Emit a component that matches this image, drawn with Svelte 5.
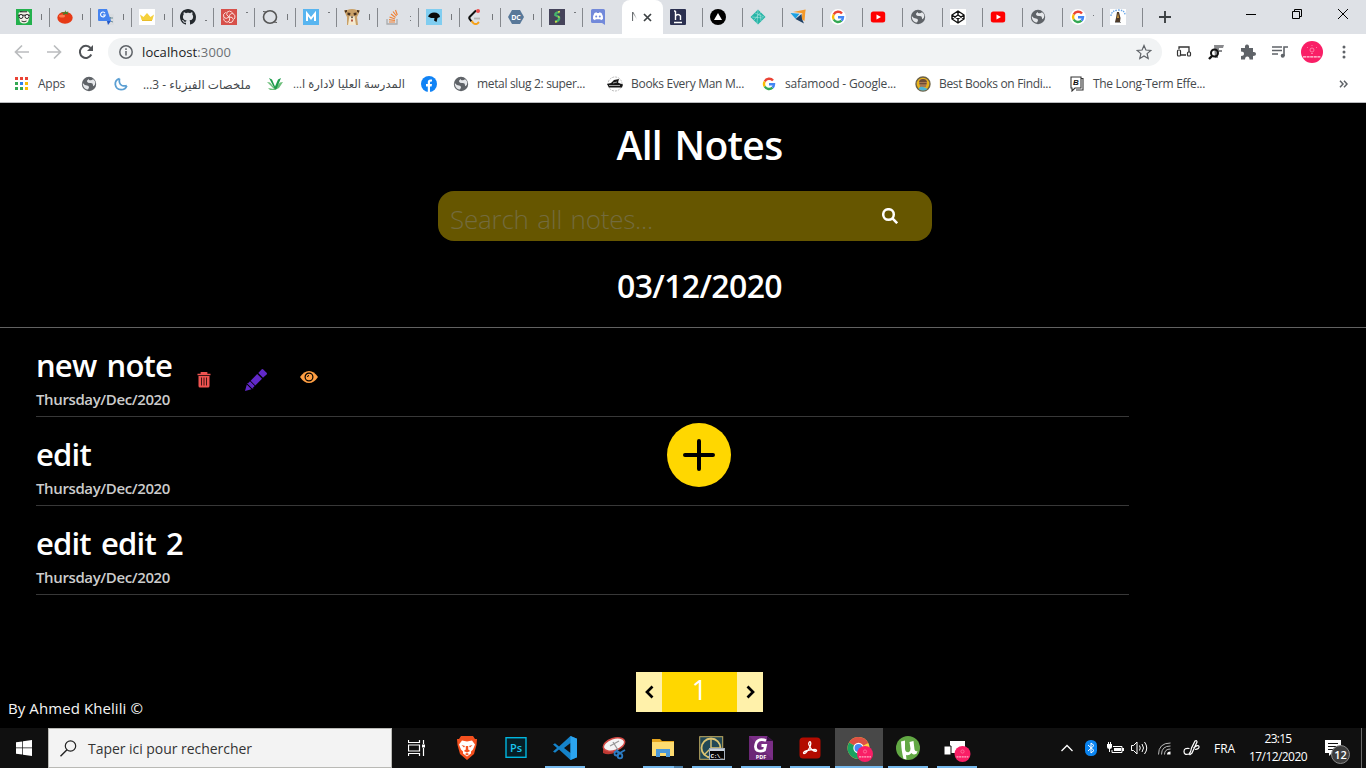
<script>
  // Spreads or tightens a label so that it fills the given width.
  function fit(node, opts) {
    const width = typeof opts === 'number' ? opts : opts.width;
    const measured = node.getBoundingClientRect().width;
    if (!measured || !width) return;
    if (opts.scale) {
      const size = parseFloat(getComputedStyle(node).fontSize);
      node.style.fontSize = `${(size * width) / measured}px`;
    } else {
      const n = [...node.textContent].length;
      node.style.letterSpacing = `${(width - measured) / n}px`;
    }
  }

  const leftTabs = [
    ['face', 'bar'], ['tomato', 'bar'], ['translate', 'bar'], ['crown', 'bar'], ['github', 'low'],
    ['swirl', 'top'], ['ring', 'bar'], ['medium', 'top'], ['dog', 'bar'], ['stack', 'dots'],
    ['bird', 'bar'], ['leet', 'bar'], ['dc', 'bar'], ['snake', 'top'], ['discord', '']
  ];
  const rightTabs = [
    ['hash', ''], ['vercel', ''], ['netlify', ''], ['kite', ''], ['google', ''], ['youtube', ''],
    ['globe', ''], ['codepen', ''], ['youtube', ''], ['globe', ''], ['google', 'mid'], ['statue', '']
  ];
  const bookmarks = [
    { icon: 'apps', text: 'Apps', w: 68, tw: 27, pad: 9 },
    { icon: 'globe', w: 32 },
    { icon: 'moon', text: 'ملخصات الفيزياء - 3...', w: 154, tw: 108, pad: 14, rtl: true },
    { icon: 'leaf', text: 'المدرسة العليا لادارة ا...', w: 154, tw: 112, pad: 10, rtl: true },
    { icon: 'facebook', w: 32 },
    { icon: 'globe', text: 'metal slug 2: super...', w: 154, tw: 108, pad: 8 },
    { icon: 'ship', text: 'Books Every Man M...', w: 154, tw: 113, pad: 8 },
    { icon: 'google', text: 'safamood - Google...', w: 154, tw: 111, pad: 8 },
    { icon: 'badge', text: 'Best Books on Findi...', w: 154, tw: 112, pad: 8 },
    { icon: 'bnote', text: 'The Long-Term Effe...', w: 154, tw: 112, pad: 8 }
  ];
  const notes = [
    { title: 'new note', tw: 136, actions: true },
    { title: 'edit', tw: 55 },
    { title: 'edit edit 2', tw: 147 }
  ];
  const apps = [
    ['brave', ''], ['ps', ''], ['vscode', 'run'], ['snip', ''], ['folder', 'run multi'], ['cmd', 'run'],
    ['foxit', 'run'], ['acrobat', 'run'], ['chrome', 'run active'], ['utorrent', 'run'], ['screens', 'run']
  ];
</script>

{#snippet icon(name, s = 16)}
  {#if name === 'face'}
    <svg width={s} height={s} viewBox="0 0 16 16"><rect width="16" height="16" fill="#23b14d" /><path d="M2.500 6Q2 3 5 3L8 2l4 .5Q14.500 4 13.500 8L12 13Q8 16 4 13Z" fill="#f7f3ea" /><path d="M2 6.200h12M4 2.800h7" stroke="#222" stroke-width="1" /><circle cx="5" cy="7.500" r="2" fill="#fff" stroke="#222" /><circle cx="11" cy="7.500" r="2" fill="#fff" stroke="#222" /><path d="M5.500 12q2.500 1.600 5 0" stroke="#333" fill="none" /></svg>
  {:else if name === 'tomato'}
    <svg width={s} height={s} viewBox="0 0 16 16"><ellipse cx="8" cy="8.800" rx="7.700" ry="6" fill="#e63a16" /><ellipse cx="5" cy="7" rx="3" ry="1.500" fill="#fa7a4d" /><path d="M8 3.500L3.500 3l3 1.500-.5 1.500L8.500 5l3 .5L10.500 4l1-1.500L9 3 8 1Z" fill="#44802b" /></svg>
  {:else if name === 'translate'}
    <svg width={s} height={s} viewBox="0 0 16 16"><path d="M6 5h9q1 0 1 1v9q0 1-1 1H9Z" fill="#dadce0" /><path d="M10 9h5M12.500 8q0 4-3 5M11 10q2 3 4 3" stroke="#6b8d99" fill="none" /><path d="M1 0h8l4 12H1Q0 12 0 11V1Q0 0 1 0Z" fill="#4684ef" /><path d="M9 12h4l-3 4Z" fill="#2056c8" /><path d="M7 4.200A2.400 2.400 0 1 0 7.300 6H5" stroke="#fff" stroke-width="1.100" fill="none" /></svg>
  {:else if name === 'crown'}
    <svg width={s} height={s} viewBox="0 0 16 16"><rect width="16" height="16" fill="#fff" /><path d="M1 5.500l3.500 2.500L8 4l3.500 4L15 5.500 13.400 11H2.600Z" fill="#f5d03b" /><path d="M3 11.500h10" stroke="#e8bd2b" /></svg>
  {:else if name === 'github'}
    <svg width={s} height={s} viewBox="0 0 16 16"><path fill="#24292e" d="M8 0C3.58 0 0 3.58 0 8c0 3.54 2.29 6.53 5.47 7.59.4.07.55-.17.55-.38 0-.19-.01-.82-.01-1.49-2.01.37-2.53-.49-2.69-.94-.09-.23-.48-.94-.82-1.13-.28-.15-.68-.52-.01-.53.63-.01 1.08.58 1.23.82.72 1.21 1.87.87 2.33.66.07-.52.28-.87.51-1.07-1.78-.2-3.64-.89-3.64-3.95 0-.87.31-1.59.82-2.15-.08-.2-.36-1.02.08-2.12 0 0 .67-.21 2.2.82.64-.18 1.32-.27 2-.27s1.36.09 2 .27c1.53-1.04 2.2-.82 2.2-.82.44 1.1.16 1.92.08 2.12.51.56.82 1.27.82 2.15 0 3.07-1.87 3.75-3.65 3.95.29.25.54.73.54 1.48 0 1.07-.01 1.93-.01 2.2 0 .21.15.46.55.38A8.01 8.01 0 0 0 16 8c0-4.42-3.58-8-8-8z" /></svg>
  {:else if name === 'swirl'}
    <svg width={s} height={s} viewBox="0 0 16 16"><rect width="16" height="16" fill="#d7504a" /><g fill="none" stroke="#fbe4e0" stroke-width=".9"><path id="petal" d="M8 8Q4.500 6 6 3.200 8.500.8 11.500 3.500" /><path d="M8 8Q4.500 6 6 3.200 8.500.8 11.500 3.500" transform="rotate(72 8 8)" /><path d="M8 8Q4.500 6 6 3.200 8.500.8 11.500 3.500" transform="rotate(144 8 8)" /><path d="M8 8Q4.500 6 6 3.200 8.500.8 11.500 3.500" transform="rotate(216 8 8)" /><path d="M8 8Q4.500 6 6 3.200 8.500.8 11.500 3.500" transform="rotate(288 8 8)" /></g></svg>
  {:else if name === 'ring'}
    <svg width={s} height={s} viewBox="0 0 16 16"><ellipse cx="8" cy="8" rx="6.500" ry="6.200" fill="none" stroke="#555" stroke-width="1.600" /><path d="M1 2.500l3 .5M12 13l3 .5" stroke="#555" /></svg>
  {:else if name === 'medium'}
    <svg width={s} height={s} viewBox="0 0 16 16"><rect width="16" height="16" fill="#58b5f0" /><path d="M4 12V4.500l4 5 4-5V12" stroke="#fff" stroke-width="2" fill="none" /></svg>
  {:else if name === 'dog'}
    <svg width={s} height={s} viewBox="0 0 16 16"><path d="M0 1.500L3 1q5-2 10 0l3 .5L14.500 5l-1.500 3 1 8H3l0-8L1.500 5Z" fill="#c9a067" /><path d="M5.500 7h5l1.500 9H4Z" fill="#f4e9cf" /><path d="M3.500 3.500l3 .5-.5 2.500-2.500-.5ZM12.500 3.500l-3 .5.5 2.500 2.500-.5ZM6.500 7.500h3L8 9.500ZM.5 1.500L3 1v1.500L1.500 4ZM15.500 1.500L13 1v1.500L14.500 4Z" fill="#46301e" /><path d="M7 10.500h2v2H7Z" fill="#b55643" /></svg>
  {:else if name === 'stack'}
    <svg width={s} height={s} viewBox="0 0 16 16"><path d="M2 10v5h10v-5" stroke="#aaabad" stroke-width="1.300" fill="none" /><path d="M4 13h6M4 10.700l6 .8M4.500 8l5.500 2M6 5l4.500 3.500M8 2.500L11.500 7M10.500 1l1.800 5" stroke="#ef8236" stroke-width="1.200" /></svg>
  {:else if name === 'bird'}
    <svg width={s} height={s} viewBox="0 0 16 16"><rect width="16" height="16" fill="#80cdf0" /><path d="M2 7.500Q4 3.500 8 3.500q5.500 0 6 4.500L11.500 9l-1 4-2.500-1.500L8.500 9 5 9Z" fill="#0a0a0a" /></svg>
  {:else if name === 'leet'}
    <svg width={s} height={s} viewBox="0 0 16 16"><path d="M9 1.500L3 7.500q-1.500 1.500 0 3l1.500 2" stroke="#111" stroke-width="2" fill="none" /><path d="M4.500 12l2 2.200q2 1.500 4 .3l1.500-1.500" stroke="#f5a21c" stroke-width="2" fill="none" /><path d="M7 9.500h6" stroke="#b5b5b5" stroke-width="1.800" /><circle cx="11" cy="2" r="2" fill="#e94b4b" /></svg>
  {:else if name === 'dc'}
    <svg width={s} height={s} viewBox="0 0 16 16"><path d="M4 1h8l4 7-4 7H4L0 8Z" fill="#587899" /><text x="8" y="10.600" text-anchor="middle" font-family="Open Sans" font-size="7" font-weight="700" fill="#fff">DC</text></svg>
  {:else if name === 'snake'}
    <svg width={s} height={s} viewBox="0 0 16 16"><rect width="16" height="16" fill="#45435a" /><path d="M10.500 3.500Q6 3 6.300 6l3.700 2q1 4-4 4.500" stroke="#46b36b" stroke-width="2.300" fill="none" /><path d="M9 3l2-.5M9 7.500l1.500 1M6 13l2-.5" stroke="#d8d34a" stroke-width="1.300" /></svg>
  {:else if name === 'discord'}
    <svg width={s} height={s} viewBox="0 0 16 16"><path d="M2.500 0h11Q15 0 15 1.500V16l-3-2H2.500Q1 14 1 12.500v-11Q1 0 2.500 0Z" fill="#7289da" /><path d="M3 10q0-4 1.500-6L6.500 3.300 7 4h2l.5-.7 2 .7Q13 6 13 10l-2 1.200-.7-1H5.700l-.7 1Z" fill="#fff" /><circle cx="6.200" cy="7.400" r="1" fill="#7289da" /><circle cx="9.800" cy="7.400" r="1" fill="#7289da" /></svg>
  {:else if name === 'hash'}
    <svg width={s} height={s} viewBox="0 0 16 16"><rect width="16" height="16" rx="1" fill="#2b3050" /><path d="M5.500 2v9M5.500 7q1-1.500 2.500-1.500T10.500 7v4M4 2h1.500M4 13.500h8" stroke="#fff" stroke-width="1.400" fill="none" /></svg>
  {:else if name === 'vercel'}
    <svg width={s} height={s} viewBox="0 0 16 16"><circle cx="8" cy="8" r="8" fill="#000" /><path d="M8 4l4 7H4Z" fill="#fff" /></svg>
  {:else if name === 'netlify'}
    <svg width={s} height={s} viewBox="0 0 16 16"><path d="M8 .5L15.500 8 8 15.500.5 8Z" fill="#27b5a7" /><path d="M5 4l9 4M2 8l11 1M8 1l-1 14M4 11l7-8M10 5l1 7" stroke="#bdebe6" stroke-width=".5" /></svg>
  {:else if name === 'kite'}
    <svg width={s} height={s} viewBox="0 0 16 16"><path d="M3 3L15.500.5 14.500 5 11 4Z" fill="#f59a2b" /><path d="M.5 4l9 .8-4 5Z" fill="#1ba0e2" /><path d="M15.500.5L14.500 12l-3-2 1-6Z" fill="#f59a2b" /><path d="M5.500 10l6-5 .5 5 2 4.500Z" fill="#203f63" /></svg>
  {:else if name === 'google'}
    <svg width={s} height={s} viewBox="0 0 16 16"><circle cx="8" cy="8" r="7.900" fill="#fff" /><g fill="none" stroke-width="2.400"><path d="M12 4.600A5 5 0 0 0 3.700 5.500" stroke="#ea4335" /><path d="M3.700 5.500a5 5 0 0 0 0 5" stroke="#fbbc05" /><path d="M3.700 10.500a5 5 0 0 0 7.800 1.100" stroke="#34a853" /><path d="M11.500 11.600A5 5 0 0 0 13 8.200H8" stroke="#4285f4" /></g></svg>
  {:else if name === 'youtube'}
    <svg width={s} height={s} viewBox="0 0 16 16"><rect x=".8" y="2.500" width="14.400" height="11" rx="2.500" fill="#f00" /><path d="M6.500 5.500L11 8l-4.500 2.500Z" fill="#fff" /></svg>
  {:else if name === 'globe'}
    <svg width={s} height={s} viewBox="0 0 16 16"><circle cx="8" cy="8" r="7.200" fill="#5f6368" /><path d="M1.800 7q2 2.500 4.200 2.500 2 0 2 2L7 13.500q-4 0-5.200-5ZM8 3q-2.500 1-2 2.500T9 7q3-.5 3 2t2-.5q1-3.500-2-5.200Q10.500 5 8 4Z" fill="#e6e8eb" /></svg>
  {:else if name === 'codepen'}
    <svg width={s} height={s} viewBox="0 0 16 16"><rect width="16" height="16" fill="#fff" /><path d="M8 2l6 4v4l-6 4-6-4V6ZM8 2v4M8 10v4M2 6l6 4 6-4M2 10l6-4 6 4" stroke="#111" stroke-width="1.400" fill="none" stroke-linejoin="round" /></svg>
  {:else if name === 'statue'}
    <svg width={s} height={s} viewBox="0 0 16 16"><rect width="16" height="16" fill="#fff" /><path d="M1 7q0-5 7-6 7 0 7 5" stroke="#6aa7e8" stroke-width="1.400" fill="none" stroke-dasharray="1.500 1" /><path d="M7 3h2l1.500 6-.5 4H5l1-4Z" fill="#4d3a2a" /><path d="M8 4l1 5H7Z" fill="#d19b3f" /><path d="M5 13.500h6" stroke="#999" /></svg>
  {:else if name === 'apps'}
    <svg width={s} height={s} viewBox="0 0 16 16"><path d="M2 1h3v3H2ZM7 1h3v3H7ZM12 1h3v3h-3Z" fill="#ea4335" /><path d="M2 6h3v3H2Z" fill="#34a853" /><path d="M7 6h3v3H7Z" fill="#2f80ed" /><path d="M12 6h3v3h-3Z" fill="#fbbc05" /><path d="M2 11h3v3H2ZM7 11h3v3H7Z" fill="#34a853" /><path d="M12 11h3v3h-3Z" fill="#fbbc05" /></svg>
  {:else if name === 'moon'}
    <svg width={s} height={s} viewBox="0 0 16 16"><path d="M6.500 2.500Q2 4 2.300 8.500q.7 5 5.700 5.200 4.500 0 5.800-4M6.500 2.500Q5.500 8 9 9.500q2 .8 4.800.2" stroke="#5b9fd3" stroke-width="1.800" fill="none" /></svg>
  {:else if name === 'leaf'}
    <svg width={s} height={s} viewBox="0 0 16 16"><path d="M8 14L0 6l3 .5 5 6 5-6 3-.5-4 6-4 2H3l-2-2 6 1Z" fill="#6dbf7b" /><path d="M8 13.500L2 2l3 1.500 3 7 3-7L14 2 9.500 13Z" fill="#1f9d4c" /></svg>
  {:else if name === 'facebook'}
    <svg width={s} height={s} viewBox="0 0 16 16"><circle cx="8" cy="8" r="8" fill="#1183f5" /><path d="M6.800 16v-5.500H5V8h1.800V6.300Q6.800 3.500 9.500 3.500l1.500.1v2H10Q9 5.600 9 6.800V8h2l-.4 2.500H9V16Z" fill="#fff" /></svg>
  {:else if name === 'ship'}
    <svg width={s} height={s} viewBox="0 0 16 16"><circle cx="8" cy="8" r="7" fill="none" stroke="#aaa" stroke-width=".8" stroke-dasharray="2 1" /><path d="M0 8l4-1 3-3 5-1-1 3.500 2 1 3 1-1 3H2Z" fill="#161616" /><path d="M2 9.500h11M6 7l4-1" stroke="#fff" stroke-width=".6" /></svg>
  {:else if name === 'badge'}
    <svg width={s} height={s} viewBox="0 0 16 16"><circle cx="8" cy="8" r="7" fill="#e8b31c" stroke="#6b6047" stroke-width="1.400" /><path d="M4 6q0-3 4-3t4 3l-1 5H5Z" fill="#a87852" /><path d="M4 6q1-3 4-3t4 3ZM4.500 7h7v1.300h-7Z" fill="#6b4c38" /><path d="M3.500 13q1-3 4.500-2t4.500 2Q8 16 3.500 13Z" fill="#4bb5d8" /></svg>
  {:else if name === 'bnote'}
    <svg width={s} height={s} viewBox="0 0 16 16"><path d="M2 1h10v11H6l-3 3v-3H2ZM12 2.500h2V14H7" fill="#fff" stroke="#333" stroke-width="1.100" /><text x="7" y="9.300" text-anchor="middle" font-family="Liberation Sans" font-style="italic" font-size="8" font-weight="700" fill="#111">B</text></svg>
  {:else if name === 'brave'}
    <svg width={s} height={s} viewBox="0 0 24 24"><path d="M6 0h12l2 3 2 0-.5 6L19 18l-7 6-7-6L2.500 9 2 3l2 0Z" fill="#f4501e" /><path d="M7 4.500l5 1 5-1 3 4-2 5-2 2 0 2-4 3-4-3 0-2-2-2-2-5Z" fill="#fff" /><path d="M6.500 9l3.500 1-1 1.500ZM17.500 9L14 10l1 1.500ZM10.800 10v3.500l-2 1.500 3.200 1.500 3.200-1.500-2-1.500V10M10 18l2-1 2 1-2 1.500Z" fill="#f4501e" /></svg>
  {:else if name === 'ps'}
    <svg width={s} height={s} viewBox="0 0 24 24"><rect x="2" y="1.700" width="20" height="19.600" fill="#061e26" stroke="#00b6df" stroke-width="1.400" /><text x="12" y="15.700" text-anchor="middle" font-family="Open Sans" font-size="11" font-weight="600" fill="#1bc4ee">Ps</text></svg>
  {:else if name === 'vscode'}
    <svg width={s} height={s} viewBox="0 0 24 24"><path d="M17.500 0L24 2.800v18.400L17.500 24 6 13.500l-4 3.200L0 15.500 4 12 0 8.500l2-1.200 4 3.200Zm0 7L11 12l6.500 5Z" fill="#1583ca" /><path d="M17.500 0L24 2.800v18.400L17.500 24Z" fill="#2ba4ef" /></svg>
  {:else if name === 'snip'}
    <svg width={s} height={s} viewBox="0 0 24 24"><path d="M1 13q6 5 14-1l-1 4Q7 20 1 17Z" fill="#bd3832" /><ellipse cx="12" cy="8.500" rx="11" ry="6" transform="rotate(-18 12 8.500)" fill="#f5f5f5" stroke="#d34a45" stroke-width="1.500" /><path d="M8 10l9-5M11 6l5 8" stroke="#999" stroke-width="1.300" /><g fill="none" stroke="#2c7cc4" stroke-width="1.800"><path d="M14 14l4 3 5-3" /><circle cx="14.500" cy="17.500" r="2" /><circle cx="18" cy="20" r="2.300" /></g></svg>
  {:else if name === 'folder'}
    <svg width={s} height={s} viewBox="0 0 24 24"><path d="M1 3h8l2 2h12v4H1Z" fill="#e5a51e" /><path d="M1 6h22v14H1Z" fill="#fddb70" /><path d="M5 21v-8h14v8h-4v-4H9v4Z" fill="#4b98d8" /></svg>
  {:else if name === 'cmd'}
    <svg width="26" height={s} viewBox="0 0 26 24"><rect x=".7" y=".7" width="23" height="22.600" fill="#224855" stroke="#c3ae64" /><circle cx="12" cy="12" r="9.500" fill="none" stroke="#ddc572" stroke-width="1.800" /><path d="M12 2v10h9M5 19l7-7" stroke="#ddc572" stroke-width="1.400" fill="none" /><rect x="10.500" y="12.500" width="15" height="11" fill="#050505" stroke="#a7b1bd" /><path d="M11 14h14" stroke="#c6d0da" stroke-width="2" /><text x="11.500" y="21.500" font-family="Liberation Mono" font-size="6" font-weight="700" textLength="13" fill="#fff">C:\_</text></svg>
  {:else if name === 'foxit'}
    <svg width={s} height={s} viewBox="0 0 24 24"><path d="M0 0h18l6 5v19H0Z" fill="#6b2776" /><path d="M0 0l24 24V6L18 0Z" fill="#843491" opacity=".6" /><path d="M18 0v5h6Z" fill="#351041" /><path d="M17 4.500Q10 2 7.500 6.500 5 12 8.500 14.500q4 1.500 7-.5l1-4.500h-4" stroke="#fff" stroke-width="2.800" fill="none" /><text x="12" y="22.800" text-anchor="middle" font-family="Open Sans" font-size="5.500" font-weight="700" fill="#fff">PDF</text></svg>
  {:else if name === 'acrobat'}
    <svg width={s} height={s} viewBox="0 0 24 24"><rect x="1.500" y="1.500" width="21" height="21" rx="3.500" fill="#b30b00" /><path d="M11 6.500q1.600-2 1.800 1Q12.600 12 7.500 17q-2 1.500-2-.2Q6.500 14 17 13.500q2.500.5 1 1.800-4 .8-7-6.300-.7-1.500 0-2.500Z" fill="none" stroke="#fff" stroke-width="1.300" /></svg>
  {:else if name === 'chrome'}
    <svg width={s} height={s} viewBox="0 0 24 24" style:overflow="visible"><circle cx="11.500" cy="12" r="11" fill="#ffcd42" /><path d="M11.500 12L2 6.500Q5 1 11.500 1t9.800 6Z" fill="#dd5144" /><path d="M2 6.500Q-2 14 4 20q4 3.500 7.500 3L16 14l-4.500-2Z" fill="#1aa260" /><circle cx="11.500" cy="12" r="5.200" fill="#fff" /><circle cx="11.500" cy="12" r="4" fill="#4687f4" /><circle cx="18" cy="18" r="8" fill="#f91e66" /><circle cx="18" cy="15.500" r="1.600" fill="none" stroke="#ff7ba2" stroke-width=".8" /><path d="M12 20.800h12" stroke="#ffabc3" stroke-width="1.200" stroke-dasharray="2 .6" /></svg>
  {:else if name === 'utorrent'}
    <svg width={s} height={s} viewBox="0 0 24 24"><circle cx="12" cy="12" r="12" fill="#62a844" /><path d="M5 5.500l4-1V13q.5 3.500 3.500 3.200 2-.5 2-3.500L13.500 6l4-1 1 8.500q.7 2.500 3 1.500l-1 2.800q-3.700 1.700-5-.8-2.500 3-5.500 2l.5 4.500-3-.8Q5.500 16 5 5.500Z" fill="#fff" /></svg>
  {:else if name === 'screens'}
    <svg width={s} height={s} viewBox="0 0 24 24" style:overflow="visible"><path d="M5 5h15v12H5Z" fill="#fff" /><path d="M-1 10h7v9h-7Z" fill="#fff" stroke="#111" /><circle cx="17.500" cy="18" r="8" fill="#f91e66" /><circle cx="17.500" cy="15.500" r="1.600" fill="none" stroke="#ff7ba2" stroke-width=".8" /><path d="M11.500 20.800h12" stroke="#ffabc3" stroke-width="1.200" stroke-dasharray="2 .6" /></svg>
  {/if}
{/snippet}

<div class="screen">
  <div class="tabs">
    <div class="group left">
      {#each leftTabs as [name, hint], i}
        <div class="tab" class:last={i === leftTabs.length - 1}>{@render icon(name)}<i class="hint {hint}"></i></div>
      {/each}
    </div>
    <div class="tab-active">
      <span class="cut">N</span>
      <svg width="9" height="9" viewBox="0 0 9 9"><path d="M1 1l7 7M8 1L1 8" stroke="#3c4043" stroke-width="1.700" /></svg>
    </div>
    <div class="group right">
      {#each rightTabs as [name, hint]}
        <div class="tab">{@render icon(name)}<i class="hint {hint}"></i></div>
      {/each}
    </div>
    <svg class="newtab" width="12" height="12" viewBox="0 0 12 12"><path d="M6 0v12M0 6h12" stroke="#3c4043" stroke-width="1.900" /></svg>
    <div class="winctl">
      <svg width="10" height="10" viewBox="0 0 10 10"><path d="M0 5.500h10" stroke="#000" /></svg>
      <svg width="10" height="10" viewBox="0 0 10 10"><path d="M.5 2.500h7v7h-7ZM2.500 2.500v-2h7v7h-2" stroke="#000" fill="none" /></svg>
      <svg width="10" height="10" viewBox="0 0 10 10"><path d="M0 0l10 10M10 0L0 10" stroke="#000" /></svg>
    </div>
  </div>

  <div class="toolbar">
    <div class="nav">
      <svg width="16" height="16" viewBox="0 0 16 16"><path d="M15 8H2M8 1.500L1.500 8 8 14.500" stroke="#babcbe" stroke-width="1.700" fill="none" /></svg>
      <svg width="16" height="16" viewBox="0 0 16 16"><path d="M1 8h13M8 1.500L14.500 8 8 14.500" stroke="#babcbe" stroke-width="1.700" fill="none" /></svg>
      <svg width="16" height="16" viewBox="0 0 16 16"><path d="M13.300 10.500A6 6 0 1 1 12.500 4" stroke="#505357" stroke-width="2" fill="none" /><path d="M15 1v6H9Z" fill="#505357" /></svg>
    </div>
    <div class="omnibox">
      <svg width="14" height="14" viewBox="0 0 14 14"><circle cx="7" cy="7" r="6.200" stroke="#5f6368" stroke-width="1.500" fill="none" /><path d="M7 6v4.500M7 3.300v1.600" stroke="#5f6368" stroke-width="1.500" /></svg>
      <span class="url" use:fit={89}>localhost<span>:3000</span></span>
      <svg class="star" width="16" height="16" viewBox="0 0 16 16"><path d="M8 1.500l1.900 4.500 4.900.4-3.700 3.200 1.100 4.800L8 11.900l-4.200 2.500 1.100-4.800L1.200 6.400 6.100 6Z" stroke="#5f6368" stroke-width="1.200" fill="none" /></svg>
    </div>
    <div class="ext">
      <svg width="16" height="16" viewBox="0 0 16 16"><path d="M3 5V3h10v5M5 11h5" stroke="#333" stroke-width="1.300" fill="none" /><rect x="1.500" y="6" width="3" height="6" rx="1" fill="#fff" stroke="#333" stroke-width="1.200" /><rect x="11.500" y="8" width="3" height="4" rx="1" fill="#fff" stroke="#333" stroke-width="1.200" /></svg>
      <svg width="16" height="16" viewBox="0 0 16 16"><path d="M6 1h10l-1 3h-4v2h3v2h-4v6H7Z" fill="#88898c" /><circle cx="6.500" cy="9" r="3.500" fill="none" stroke="#111" stroke-width="2" /><path d="M4 12l-3 3" stroke="#111" stroke-width="2.400" /></svg>
      <svg width="16" height="16" viewBox="0 0 16 16"><path d="M1 4h4q-.5-3.500 2-3.500T9 4h4v4q3-.4 3 1.800T13 12v3.500H9.500q0-3-2.200-3t-2.300 3H1V12q3 0 3-2.200T1 7.500Z" fill="#5f6368" /></svg>
      <svg width="16" height="16" viewBox="0 0 16 16"><path d="M0 3h10M0 6.500h10M0 10h6M12 12V3h4" stroke="#5f6368" stroke-width="1.600" fill="none" /><circle cx="10.700" cy="11.800" r="2" fill="#5f6368" /></svg>
      <svg width="22" height="22" viewBox="0 0 22 22"><circle cx="11" cy="11" r="11" fill="#f91e66" /><circle cx="11" cy="9" r="2" stroke="#ff8fb2" fill="none" stroke-width=".8" /><path d="M11 5v-1M7 7l-1-1M15 7l1-1M10 12.500h2" stroke="#ff8fb2" stroke-width=".8" /><path d="M2 15.800h18" stroke="#ffd5e1" stroke-width="1.300" stroke-dasharray="3 .6" /></svg>
      <svg width="16" height="16" viewBox="0 0 16 16"><g fill="#5f6368"><circle cx="8" cy="3" r="1.500" /><circle cx="8" cy="8" r="1.500" /><circle cx="8" cy="13" r="1.500" /></g></svg>
    </div>
  </div>

  <div class="bookmarks">
    {#each bookmarks as b}
      <div class="bm" style:width="{b.w}px">
        {@render icon(b.icon)}
        {#if b.text}
          <span class="bmt" class:rtl={b.rtl} style:margin-left="{b.pad}px" dir={b.rtl ? 'rtl' : 'ltr'} use:fit={{ width: b.tw, scale: b.rtl }}>{b.text}</span>
        {/if}
      </div>
    {/each}
    <svg class="more" width="9" height="8" viewBox="0 0 9 8"><path d="M1 .8L4 4 1 7.200M5 .8L8 4 5 7.200" stroke="#5f6368" stroke-width="1.500" fill="none" /></svg>
  </div>

  <main>
    <h1><span use:fit={166}>All Notes</span></h1>
    <div class="search">
      <span use:fit={203}>Search all notes...</span>
      <svg width="16" height="16" viewBox="0 0 16 16"><circle cx="6.500" cy="6.500" r="5.300" stroke="#fff" stroke-width="2.500" fill="none" /><path d="M10.200 10.200l5 5" stroke="#fff" stroke-width="2.600" /></svg>
    </div>
    <h2><span use:fit={165}>03/12/2020</span></h2>
    <ul>
      {#each notes as n}
        <li>
          <div class="text">
            <h3><span use:fit={n.tw}>{n.title}</span></h3>
            <p><span use:fit={134}>Thursday/Dec/2020</span></p>
          </div>
          {#if n.actions}
            <div class="actions">
              <svg width="14" height="16" viewBox="0 0 14 16"><path d="M4.500 2V.8h5V2M.5 2.500h13" stroke="#ef5350" stroke-width="1.700" fill="none" /><path d="M1.500 4h11v10q0 1.500-1.500 1.500H3q-1.500 0-1.500-1.500Z" fill="#ef5350" /><path d="M4.500 5.500v8M7 5.500v8M9.500 5.500v8" stroke="#421413" /></svg>
              <svg width="22" height="22" viewBox="0 0 22 22"><path d="M0 22l1.800-6.500 4.700 4.700ZM2.800 14.500L5 12.300 9.700 17 7.500 19.200ZM5.600 11.700L12.200 5 17 9.800 10.300 16.400ZM13.300 4L16.500.5q1-.8 1.800 0l3.300 3.300q.8.900 0 1.700L18 8.700Z" fill="#6128c9" /><path d="M2.500 14.200L7.800 19.500" stroke="#6128c9" /></svg>
              <svg width="18" height="12" viewBox="0 0 18 12"><path d="M0 6Q4 0 9 0t9 6q-4 6-9 6T0 6Z" fill="#ff9f43" /><circle cx="9" cy="6" r="3.900" fill="none" stroke="#000" stroke-width="1.200" /><path d="M7.500 6q0-1.500 1.500-1.500" stroke="#000" fill="none" /></svg>
            </div>
          {/if}
        </li>
      {/each}
    </ul>
    <div class="pager">
      <button aria-label="previous"><svg width="9" height="14" viewBox="0 0 9 14"><path d="M7.500 1.500L2 7l5.500 5.500" stroke="#000" stroke-width="2.700" fill="none" /></svg></button>
      <span>1</span>
      <button aria-label="next"><svg width="9" height="14" viewBox="0 0 9 14"><path d="M1.500 1.500L7 7l-5.500 5.500" stroke="#000" stroke-width="2.700" fill="none" /></svg></button>
    </div>
    <footer><span use:fit={135}>By Ahmed Khelili ©</span></footer>
    <button class="add" aria-label="add"><svg width="32" height="32" viewBox="0 0 32 32"><path d="M16 2v28M2 16h28" stroke="#000" stroke-width="4" stroke-linecap="round" /></svg></button>
  </main>

  <div class="taskbar">
    <div class="start"><svg width="16" height="16" viewBox="0 0 16 16"><path d="M0 2.300l6.300-.9v6.200H0ZM7 1.300L16 0v7.600H7ZM0 8.300h6.300v6.300L0 13.700ZM7 8.300h9V16l-9-1.300Z" fill="#fff" /></svg></div>
    <div class="find">
      <svg width="17" height="17" viewBox="0 0 17 17"><circle cx="10.500" cy="6" r="5.200" stroke="#222" stroke-width="1.200" fill="none" /><path d="M7 9.800L.5 16.300" stroke="#222" stroke-width="1.400" /></svg>
      <span use:fit={164}>Taper ici pour rechercher</span>
    </div>
    <div class="view"><svg width="17" height="16" viewBox="0 0 17 16"><path d="M.5 0v2.500h11V0M.5 16v-2.500h11V16M.5 5h11v6H.500ZM15.500 0v4M15.500 8v8" stroke="#fff" stroke-width="1.200" fill="none" /><rect x="14" y="4.500" width="3" height="3" fill="#fff" /></svg></div>
    <div class="apps">
      {#each apps as [name, state]}
        <div class="app {state}">{@render icon(name, 24)}</div>
      {/each}
    </div>
    <div class="tray">
      <div style:width="24px"><svg width="12" height="8" viewBox="0 0 12 8"><path d="M.5 7L6 1.500 11.500 7" stroke="#fff" stroke-width="1.300" fill="none" /></svg></div>
      <div style:width="24px"><svg width="12" height="16" viewBox="0 0 12 16"><rect width="12" height="16" rx="5.500" fill="#0a84f0" /><path d="M3 5l6 5.500L6 13V3l3 2.500L3 11" stroke="#fff" fill="none" /></svg></div>
      <div style:width="24px"><svg width="17" height="12" viewBox="0 0 17 12"><path d="M6 4.500h9v6H5V8" stroke="#fff" fill="none" /><path d="M7 6h7v3H7ZM15 6h2v3h-2ZM0 2h5v3q0 2-2.500 2T0 5Z" fill="#fff" /><path d="M1.500 0v2M3.500 0v2M2.500 6v4" stroke="#fff" /></svg></div>
      <div style:width="24px"><svg width="17" height="14" viewBox="0 0 17 14"><path d="M.5 4.500h2L6 1v12L2.500 9.500h-2ZM8.500 4.500q1.500 2.500 0 5M11 3q3 4 0 8M13.500 1q4.500 6 0 12" stroke="#fff" fill="none" /></svg></div>
      <div style:width="26px"><svg width="13" height="13" viewBox="0 0 13 13"><path d="M.5 12.500Q.5 1 12.500 1M3.500 12.500Q3.500 4 12.500 4M6.500 12.500q0-5.500 6-5.500" stroke="#bbb" fill="none" /><path d="M9 12.500q0-3 3.500-3v3Z" fill="#fff" /></svg></div>
      <div style:width="28px"><svg width="17" height="16" viewBox="0 0 17 16"><path d="M6.500 8.500Q1 7.500 1 11.500T6 14q2-2 2.500-6L12 1q2-1 2 1L9 13l-2.500 2M10.500 8q5-4 5.500-1.500T12 9.500" stroke="#fff" stroke-width="1.200" fill="none" /></svg></div>
      <div style:width="39px"><span use:fit={21}>FRA</span></div>
      <div class="clock"><span use:fit={27}>23:15</span><span use:fit={58}>17/12/2020</span></div>
      <div class="notif">
        <svg width="16" height="16" viewBox="0 0 16 16"><path d="M0 0h16v13H7l-3 3v-3H0Z" fill="#fff" /><path d="M3 3.500h10M3 6.500h10M3 9.500h7" stroke="#111" /></svg>
        <b>12</b>
      </div>
      <div class="desk"></div>
    </div>
  </div>
</div>

<style>
  :global(body) { margin: 0; background: #000; overflow: hidden; }
  * { box-sizing: border-box; }
  svg { display: block; flex: none; }
  span { white-space: pre; }
  button { border: 0; padding: 0; }
  .screen { width: 1366px; height: 768px; display: flex; flex-direction: column; font-family: "Open Sans", "Noto Sans", "DejaVu Sans", sans-serif; }

  .tabs { height: 34px; background: #dee1e6; display: flex; flex: none; }
  .group { display: flex; }
  .left { padding-left: 8px; }
  .tab { width: 41px; height: 19px; margin-top: 8px; padding: 1px 0 0 7px; border-right: 1px solid #85888d; display: flex; }
  .left .tab:first-child { width: 42px; padding-left: 8px; }
  .tab.last { width: 40px; border-color: transparent; }
  .right .tab { width: 40px; }
  .hint { width: 1px; margin: 5px 0 0 9px; height: 0; background: #75787c; flex: none; }
  .hint.bar { height: 6px; }
  .hint.top { height: 1px; width: 2px; margin-top: 3px; }
  .hint.mid { height: 1px; width: 1px; margin: 6px 0 0 7px; }
  .hint.low { height: 1px; width: 2px; margin-top: 11px; }
  .hint.dots { height: 5px; margin-top: 7px; background: none; border-top: 1px solid #75787c; border-bottom: 1px solid #75787c; }
  .tab-active { width: 41px; background: #fff; border-radius: 8px 8px 0 0; display: flex; align-items: center; padding-left: 9px; gap: 6px; margin-left: -1px; }
  .cut { width: 6px; overflow: hidden; font-size: 12px; color: #45494d; line-height: 34px; -webkit-mask-image: linear-gradient(90deg, #000 20%, transparent); mask-image: linear-gradient(90deg, #000 20%, transparent); }
  .newtab { margin: 11px 0 0 16px; }
  .winctl { margin-left: auto; display: flex; gap: 36px; padding: 9px 18px 0 0; }

  .toolbar { height: 36px; background: #fff; display: flex; align-items: center; flex: none; }
  .nav { display: flex; gap: 16px; padding-left: 14px; width: 108px; }
  .omnibox { width: 1054px; height: 28px; border-radius: 14px; background: #f1f3f4; display: flex; align-items: center; padding: 0 10px 0 11px; }
  .url { margin-left: 9px; font-size: 13px; color: #202124; }
  .url span { color: #6d7175; }
  .star { margin-left: auto; }
  .ext { display: flex; align-items: center; padding-left: 14px; gap: 16px; }
  .ext svg:nth-child(5) { margin: 0 -3px; }

  .bookmarks { height: 33px; background: #fff; border-bottom: 1px solid #b9bbbe; display: flex; flex: none; padding: 6px 0 0 13px; }
  .bm { display: flex; align-items: center; height: 16px; flex: none; }
  .bmt { font-size: 12px; line-height: 16px; color: #45494d; }
  .more { margin: 4px 18px 0 auto; }

  main { height: 625px; flex: none; background: #000; color: #fff; position: relative; display: flex; flex-direction: column; }
  h1, h2, h3, p, ul { margin: 0; padding: 0; font-weight: 600; }
  h1 { height: 81px; line-height: 83px; font-size: 39px; padding-left: 33px; text-align: center; word-spacing: 3px; }
  .search { margin: 7px 0 0 438px; width: 494px; height: 50px; border-radius: 16px; background: #665600; display: flex; align-items: center; justify-content: space-between; padding: 0 34px 0 12px; flex: none; font-size: 26px; font-weight: 300; color: #736b3e; word-spacing: 2px; }
  .search span { line-height: 52px; padding-top: 5px; }
  h2 { height: 86px; line-height: 89px; font-size: 32px; padding-left: 33px; text-align: center; }
  ul { list-style: none; border-top: 1px solid #626262; padding-left: 36px; height: 345px; }
  li { width: 1093px; height: 89px; border-bottom: 1px solid #383838; padding-top: 7px; display: flex; }
  h3 { font-size: 31px; height: 56px; line-height: 60px; word-spacing: 3px; }
  p { font-size: 15px; height: 16px; line-height: 16px; color: #ccc; }
  .actions { display: flex; padding-left: 25px; height: 22px; margin-top: 34px; }
  .actions svg:nth-child(1) { margin-top: 3px; }
  .actions svg:nth-child(2) { margin-left: 34px; }
  .actions svg:nth-child(3) { margin: 2px 0 0 33px; }
  .pager { width: 127px; height: 40px; margin-left: 636px; display: flex; background: #ffd700; }
  .pager button { width: 26px; background: #fff1aa; display: flex; align-items: center; justify-content: center; }
  .pager > span { flex: 1; text-align: center; font-size: 27px; line-height: 36px; }
  footer { font-size: 15px; line-height: 20px; padding-left: 8px; margin-top: -14px; color: #f5f5f5; }
  .add { position: absolute; left: 667px; top: 320px; width: 64px; height: 64px; border-radius: 50%; background: #ffd700; display: flex; align-items: center; justify-content: center; }

  .taskbar { height: 40px; background: #101010; display: flex; flex: none; color: #fff; }
  .start, .view { width: 48px; display: flex; align-items: center; justify-content: center; }
  .find { width: 344px; background: #f3f3f3; border: 1px solid #b9b9b5; display: flex; align-items: center; padding-left: 11px; gap: 11px; font-size: 14px; color: #333; }
  .view { margin-right: 3px; }
  .apps { display: flex; gap: 1px; }
  .app { width: 48px; height: 40px; display: flex; justify-content: center; padding-top: 8px; }
  .run { background: linear-gradient(#76b9ed, #76b9ed) 4px 38px / 40px 2px no-repeat; }
  .multi { background: linear-gradient(90deg, #76b9ed 31px, #4c7fa8 31px) 4px 38px / 40px 2px no-repeat; }
  .active { background: linear-gradient(#76b9ed, #76b9ed) 0 38px / 48px 2px no-repeat #484848; }
  .tray { margin-left: auto; display: flex; font-size: 12px; }
  .tray > div { display: flex; align-items: center; justify-content: center; }
  .tray > .clock { width: 68px; flex-direction: column; line-height: 18px; }
  .tray > .notif { width: 49px; position: relative; justify-content: flex-start; padding-left: 13px; }
  .notif b { position: absolute; left: 19px; top: 17px; width: 19px; height: 19px; border-radius: 50%; background: #3d3d3d; border: 1px solid #8b8b8b; font-size: 11px; line-height: 17px; text-align: center; font-weight: 600; }
  .tray > .desk { width: 5px; border-left: 1px solid #6b6b6b; }
</style>
